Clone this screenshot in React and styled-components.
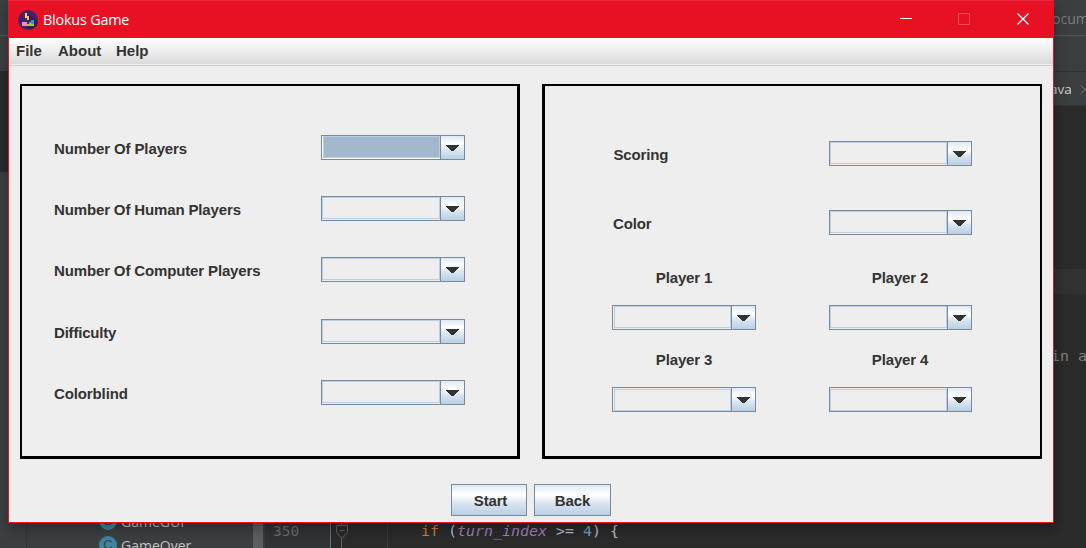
import React from 'react';
import styled, { createGlobalStyle } from 'styled-components';

const Global = createGlobalStyle`
  * { box-sizing: border-box; }
  body { margin: 0; overflow: hidden; }
`;

const Desktop = styled.div`
  position: relative;
  width: 1086px;
  height: 548px;
  overflow: hidden;
  background: #2b2b2b;
  font-family: 'Open Sans', 'Noto Sans', sans-serif;
`;

/* ---- editor behind the window ---- */
const Ide = styled.div`
  display: flex;
  justify-content: space-between;
  height: 548px;
`;
const LeftStrip = styled.div`
  display: flex;
  flex-direction: column;
  width: 8px;
  height: 523px;
`;
const RightStrip = styled(LeftStrip)`
  width: 36px;
`;
const Band = styled.div`
  height: ${p => p.$h}px;
  flex: none;
  background: ${p => p.$bg || '#3c3f41'};
  border-bottom: 1px solid ${p => p.$line || p.$bg || '#3c3f41'};
  color: ${p => p.$color || '#808080'};
  font: ${p => p.$font || "14px 'Open Sans', sans-serif"};
  line-height: ${p => p.$h}px;
  padding-left: ${p => p.$x || 0}px;
  padding-top: ${p => p.$y || 0}px;
  white-space: pre;
  display: flex;
  align-items: center;
`;
const CloseMark = styled.svg`
  width: 9px;
  height: 9px;
  margin-left: 8px;
  flex: none;
`;
const Bottom = styled.div`
  position: absolute;
  left: 0;
  top: 509px;
  width: 1086px;
  height: 39px;
  display: flex;
`;
const Side = styled.div`
  width: 27px;
  background: #3c3f41;
  border-right: 1px solid #323537;
`;
const Tree = styled.div`
  width: 226px;
  background: #3c3f41;
  padding-left: 72px;
`;
const TreeRow = styled.div`
  display: flex;
  align-items: center;
  gap: 4px;
  height: 24px;
  color: #c3c3c3;
  font-size: 14px;
`;
const ClassIcon = styled.span`
  width: 18px;
  height: 18px;
  border-radius: 50%;
  background: #3e86a0;
  color: #2c424b;
  font: 13px/18px 'Liberation Sans', sans-serif;
  text-align: center;
`;
const Scroll = styled.div`
  width: 12px;
  background: #5d5f61;
  border-right: 2px solid #393c3e;
`;
const Gutter = styled.div`
  width: 66px;
  padding: 10px 0 0 8px;
  background: #313335;
  border-right: 1px solid #557c6c;
  color: #6a6d70;
  font: 14.5px/24px 'DejaVu Sans Mono', monospace;
`;
const Code = styled.div`
  flex: 1;
  display: flex;
  padding-top: 10px;
  background: #2b2b2b;
  color: #b4c2d1;
  font: 14.95px/25px 'DejaVu Sans Mono', monospace;
  white-space: pre;
`;
const Fold = styled.svg`
  width: 22px;
  height: 29px;
  flex: none;
`;
const Guide = styled.div`
  width: 34px;
  flex: none;
  margin-left: 34px;
  height: 29px;
  border-left: 1px solid #393939;
`;
const Line = styled.div`
  i { color: #a380b6; }
  b { color: #d67c38; font-weight: 400; }
  u { color: #6da0c8; text-decoration: none; }
`;

/* ---- game window ---- */
const Window = styled.div`
  position: absolute;
  left: 8px;
  top: 0;
  width: 1046px;
  height: 523px;
  display: flex;
  flex-direction: column;
  border: 1px solid #e81123;
  border-top-color: #e62a3b;
  background: #eeeeee;
  box-shadow: 1px 5px 14px rgba(0, 0, 0, 0.36);
`;
const TitleBar = styled.div`
  display: flex;
  align-items: center;
  height: 37px;
  padding-left: 9px;
  background: #e81123;
  color: #fff;
`;
const AppIcon = styled.svg`
  width: 20px;
  height: 20px;
`;
const Title = styled.div`
  flex: 1;
  padding-left: 5px;
  font-size: 14.4px;
  letter-spacing: -0.2px;
`;
const Controls = styled.svg`
  width: 174px;
  height: 37px;
`;
const MenuBar = styled.div`
  display: flex;
  height: 28px;
  flex: none;
  padding-left: 7px;
  background: linear-gradient(#ffffff, #dadada 26px, #eeeeee 26px);
  border-bottom: 1px solid #cccccc;
`;
const textFont = `bold 15px 'Liberation Sans', Arial, sans-serif`;
const MenuItem = styled.div`
  width: ${p => p.$w}px;
  color: #333;
  font: ${textFont};
  line-height: 26px;
`;
const Content = styled.div`
  flex: 1;
  padding: 18px 10px 0 11px;
  border: solid #f8f8f8;
  border-width: 0 1px 1px 0;
`;
const Panels = styled.div`
  display: flex;
  gap: 22px;
`;
const Panel = styled.div`
  flex: none;
  width: 500px;
  height: 375px;
  border: solid #000;
  border-width: ${p => p.$bw};
  padding: ${p => p.$pad};
`;
const Row = styled.div`
  display: flex;
  align-items: center;
  justify-content: space-between;
  height: 25px;
  margin-bottom: ${p => p.$gap}px;
`;
const Label = styled.div`
  color: #333;
  font: ${textFont};
  line-height: 25px;
  letter-spacing: ${p => p.$ls ?? -0.15}px;
  padding: 2px 0 0 ${p => p.$x || 0}px;
  white-space: nowrap;
`;
const PlayerLabel = styled(Label)`
  width: ${p => p.$w}px;
  padding: 0 0 2px;
  text-align: center;
`;
const Combo = styled.div`
  display: flex;
  width: ${p => p.$w || 144}px;
  height: 25px;
  border: 1px solid #7a8a99;
`;
const Field = styled.div`
  flex: 1;
  border: solid ${p => (p.$selected ? '#ffffff' : '#eeeeee')};
  border-width: ${p => p.$inset || '0 0 1px 0'};
  background: ${p => (p.$selected ? '#a3b8cc' : '#eeeeee')};
  box-shadow: inset 0 0 0 1px #b8cfe5;
`;
const Arrow = styled.div`
  display: flex;
  align-items: center;
  justify-content: center;
  width: 24px;
  border-left: 1px solid #7a8a99;
  background: linear-gradient(#dde8f3, #ffffff 32%, #ffffff 36%, #dbe6f1 60%, #b8cfe5);
  svg { width: 13px; height: 7px; margin-top: 2px; }
`;
const Actions = styled.div`
  display: flex;
  gap: 7px;
  padding: 25px 0 0 431px;
`;
const Button = styled.button`
  width: ${p => p.$w}px;
  height: 32px;
  padding: 0 0 0 ${p => p.$x || 0}px;
  border: 1px solid #7a8a99;
  background: linear-gradient(#dde8f3, #ffffff 30%, #ffffff 34%, #dbe6f1 60%, #b8cfe5);
  color: #333;
  font: ${textFont};
  letter-spacing: -0.15px;
`;

function Select({ w, inset, selected }) {
  return (
    <Combo $w={w}>
      <Field $inset={inset} $selected={selected} />
      <Arrow>
        <svg viewBox="0 0 13 7" shapeRendering="crispEdges">
          <path d="M0 0H13L7.5 6H5.5Z" fill="#333" />
        </svg>
      </Arrow>
    </Combo>
  );
}

const options = [
  { text: 'Number Of Players', gap: 36, ls: -0.12, inset: '0 0 1px 1px', selected: true },
  { text: 'Number Of Human Players', gap: 36, ls: -0.14 },
  { text: 'Number Of Computer Players', gap: 37, ls: -0.14 },
  { text: 'Difficulty', gap: 36, ls: -0.2 },
  { text: 'Colorblind', gap: 0, ls: -0.12 },
];

export default function App() {
  return (
    <Desktop>
      <Global />
      <Ide>
        <LeftStrip>
          <Band $h={36} $line="#555759" />
          <Band $h={36} $line="#2b2b2b" />
          <Band $h={100} $bg="#2b2b2b" />
          <Band $h={351} />
        </LeftStrip>
        <RightStrip>
          <Band $h={36} $x={2} $y={2} $line="#555759" $color="#7c7c7c">ocum</Band>
          <Band $h={36} $line="#303234" />
          <Band $h={34} $x={0} $y={1} $line="#323232" $color="#d4d4d4" $font="13.5px 'Open Sans', sans-serif">
            ava
            <CloseMark>
              <path d="M1 0.5L9 8.5M9 0.5L1 8.5" stroke="#777" />
            </CloseMark>
          </Band>
          <Band $h={163} $bg="#2b2b2b" />
          <Band $h={25} $bg="#323232" />
          <Band $h={50} $bg="#2b2b2b" />
          <Band $h={25} $x={1} $bg="#2b2b2b" $font="14.95px 'DejaVu Sans Mono', monospace">in a</Band>
        </RightStrip>
      </Ide>
      <Bottom>
        <Side />
        <Tree>
          <TreeRow><ClassIcon>C</ClassIcon>GameGUI</TreeRow>
          <TreeRow><ClassIcon>C</ClassIcon>GameOver</TreeRow>
        </Tree>
        <Scroll />
        <Gutter>350</Gutter>
        <Code>
          <Fold viewBox="0 0 22 29" fill="none" stroke="#606366">
            <path d="M10.5 0V6M10.5 20V29M5.5 6.5H16.5V13.5L11 19.5L5.5 13.5ZM8.5 11.5H13.5" />
          </Fold>
          <Guide />
          <Line><b>if</b> (<i>turn_index</i> &gt;= <u>4</u>) {'{'}</Line>
        </Code>
      </Bottom>

      <Window>
        <TitleBar>
          <AppIcon viewBox="0 0 20 20">
            <circle cx="10" cy="10" r="10" fill="#46206f" />
            <path d="M11 4L19.8 12A10 10 0 0 1 12 19.8L8 16L16 14V10L11 9Z" fill="#35175a" />
            <path d="M7 3H9V6H11V10H9V8H7Z" fill="#ffd545" />
            <path d="M9 6H11V10H9Z" fill="#f8b93c" />
            <path d="M4 12H9V16H4Z" fill="#f58bbd" />
            <path d="M13 10H16V14H11V12H13Z" fill="#3c8df0" />
            <path d="M9 14H11V13H13V14H16V16H9Z" fill="#8be01c" />
          </AppIcon>
          <Title>Blokus Game</Title>
          <Controls viewBox="0 0 174 37" fill="none">
            <path d="M21 17.5H33" stroke="#fff" />
            <rect x="79.5" y="12.5" width="11" height="11" stroke="#f04b58" />
            <path d="M138.5 12.5L149.5 23.5M149.5 12.5L138.5 23.5" stroke="#fff" strokeWidth="1.3" />
          </Controls>
        </TitleBar>
        <MenuBar>
          <MenuItem $w={42}>File</MenuItem>
          <MenuItem $w={58}>About</MenuItem>
          <MenuItem $w={50}>Help</MenuItem>
        </MenuBar>
        <Content>
          <Panels>
            <Panel $bw="2px 3px 3px 2px" $pad="49px 52px 0 32px">
              {options.map(o => (
                <Row key={o.text} $gap={o.gap}>
                  <Label $ls={o.ls}>{o.text}</Label>
                  <Select inset={o.inset} selected={o.selected} />
                </Row>
              ))}
            </Panel>
            <Panel $bw="2px 2px 3px 3px" $pad="55px 68px 0 67px">
              <Row $gap={44}><Label $x={1.5}>Scoring</Label><Select w={143} /></Row>
              <Row $gap={31}><Label $x={1}>Color</Label><Select w={143} /></Row>
              <Row $gap={14}>
                <PlayerLabel $w={144}>Player 1</PlayerLabel>
                <PlayerLabel $w={144}>Player 2</PlayerLabel>
              </Row>
              <Row $gap={18}>
                <Select inset="0 0 1px 1px" />
                <Select w={143} />
              </Row>
              <Row $gap={14}>
                <PlayerLabel $w={144}>Player 3</PlayerLabel>
                <PlayerLabel $w={144}>Player 4</PlayerLabel>
              </Row>
              <Row $gap={0}>
                <Select inset="1px 0 0 1px" />
                <Select w={143} inset="1px 0 0 0" />
              </Row>
            </Panel>
          </Panels>
          <Actions>
            <Button $w={76} $x={3}>Start</Button>
            <Button $w={77}>Back</Button>
          </Actions>
        </Content>
      </Window>
    </Desktop>
  );
}
